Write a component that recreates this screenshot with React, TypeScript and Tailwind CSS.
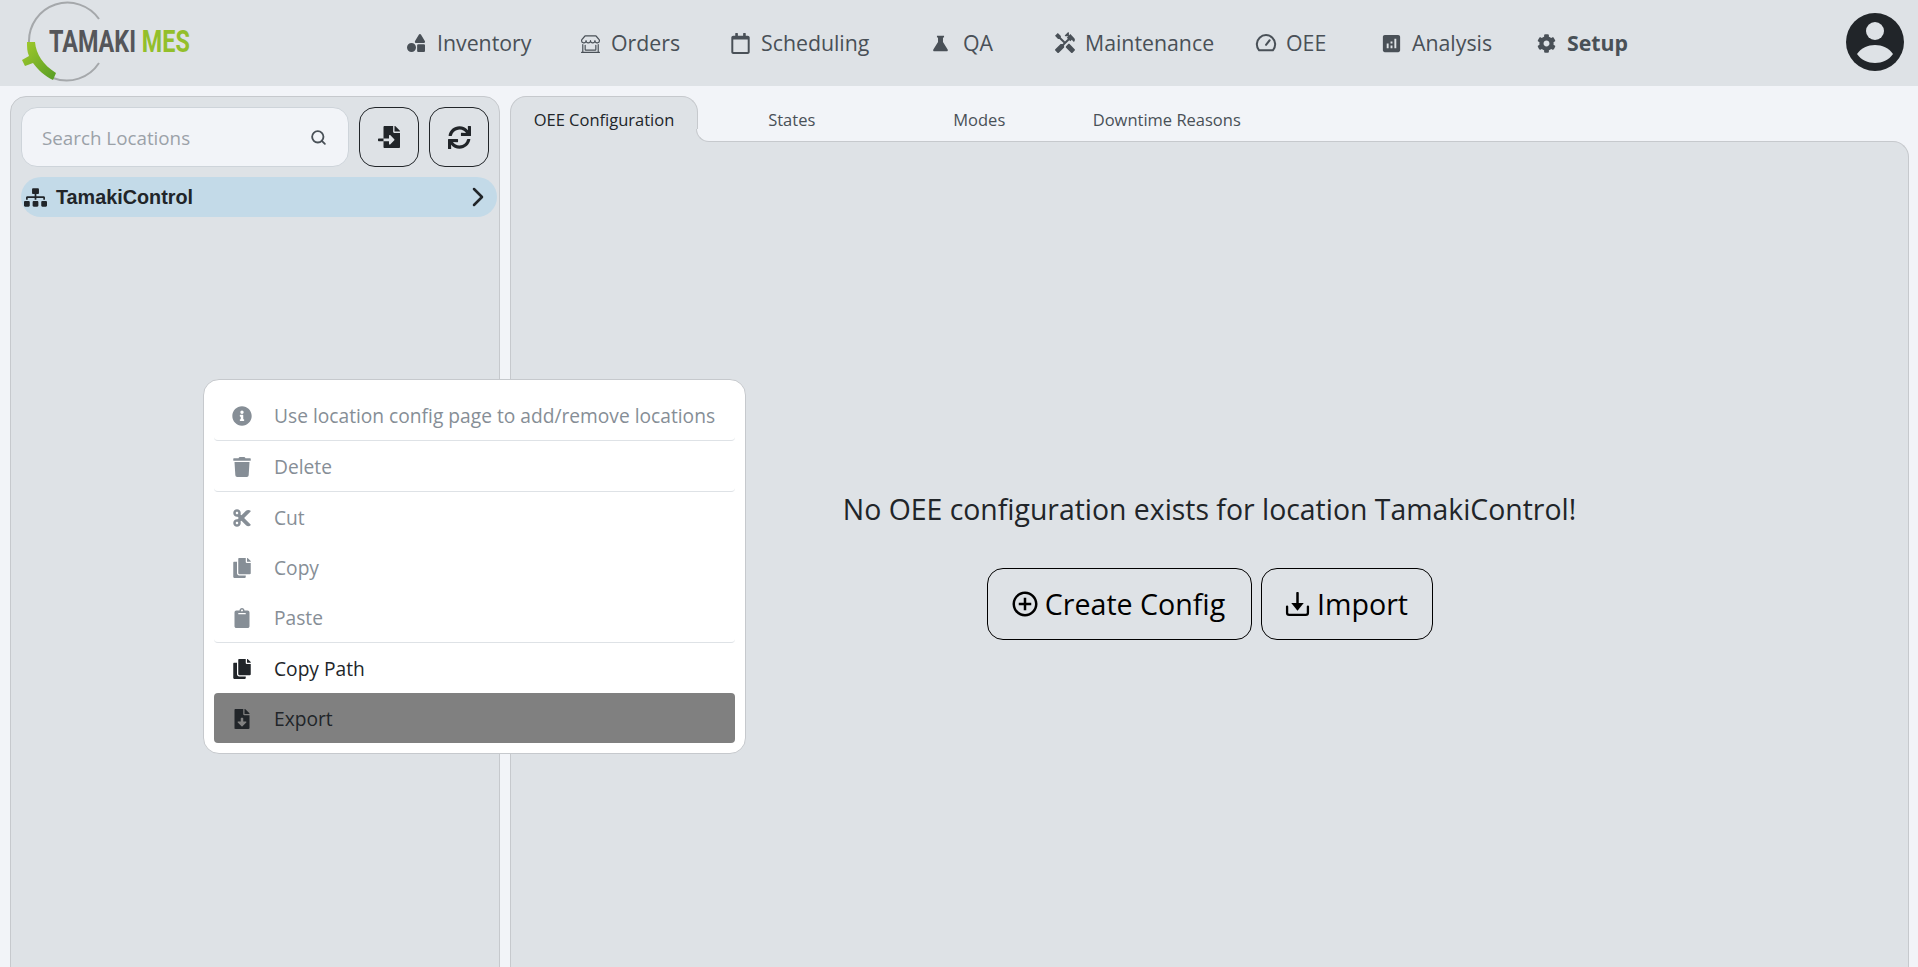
import React from "react";
import {
  FaShapes, FaRegCalendar, FaCog, FaSitemap, FaFileImport, FaSync,
  FaInfoCircle, FaTrash, FaCut, FaCopy, FaClipboard, FaFileDownload,
} from "react-icons/fa";
import { BsShopWindow } from "react-icons/bs";
import { MdHandyman, MdAnalytics, MdOutlineAddCircleOutline } from "react-icons/md";
import { ChevronRight, Search } from "lucide-react";

function GaugeIcon({ className }: { className?: string }) {
  return (
    <svg viewBox="0 0 24 24" fill="none" stroke="currentColor" strokeWidth="2.2" strokeLinecap="round" strokeLinejoin="round" className={className}>
      <path d="M4.5 20a10 10 0 1 1 15 0z" />
      <path d="M12 14l4-5" />
    </svg>
  );
}

function FlaskIcon({ className }: { className?: string }) {
  return (
    <svg viewBox="0 0 24 24" fill="currentColor" className={className}>
      <path d="M7 1h10v2.5h-1.500V10l6.600 10.400c.8 1.300-.1 2.600-1.500 2.600H3.400c-1.400 0-2.300-1.300-1.500-2.600L8.500 10V3.500H7z" />
    </svg>
  );
}

function TrayDownIcon({ className }: { className?: string }) {
  return (
    <svg viewBox="0 0 24 24" fill="none" className={className}>
      <path d="M2 14v6a2 2 0 0 0 2 2h16a2 2 0 0 0 2-2v-6" stroke="currentColor" strokeWidth="2.2" strokeLinecap="round" />
      <path d="M12 1v12" stroke="currentColor" strokeWidth="2.4" strokeLinecap="round" />
      <path d="M6 10.500h12L12 18z" fill="currentColor" />
    </svg>
  );
}

const navItems = [
  { label: "Inventory", icon: FaShapes, width: "w-[174px]", iconClass: "h-[18px] w-[18px]" },
  { label: "Orders", icon: BsShopWindow, width: "w-[150px]", iconClass: "h-[19px] w-[19px]" },
  { label: "Scheduling", icon: FaRegCalendar, width: "w-[202px]", iconClass: "h-[21px] w-[21px] -ml-px" },
  { label: "QA", icon: FlaskIcon, width: "w-[122px]", iconClass: "h-[17px] w-[17px] -ml-px" },
  { label: "Maintenance", icon: MdHandyman, width: "w-[201px]", iconClass: "h-[24px] w-[24px] -ml-[2px]" },
  { label: "OEE", icon: GaugeIcon, width: "w-[126px]", iconClass: "h-[22px] w-[22px] -ml-px" },
  { label: "Analysis", icon: MdAnalytics, width: "w-[155px]", iconClass: "h-[23px] w-[23px] -ml-[2px]" },
  { label: "Setup", icon: FaCog, width: "w-[100px]", iconClass: "h-[19px] w-[19px]", active: true },
];

function Logo() {
  return (
    <div className="relative h-[86px] w-[407px] shrink-0">
      <svg viewBox="0 0 200 86" className="absolute left-0 top-0 h-[86px] w-[200px]">
        <defs>
          <linearGradient id="logoGreen" x1="0" y1="0" x2="1" y2="1">
            <stop offset="0" stopColor="#a3cb2c" />
            <stop offset="1" stopColor="#569c25" />
          </linearGradient>
        </defs>
        <path d="M99 19A38.500 38.500 0 0 0 29 42" fill="none" stroke="#a5a8ab" strokeWidth="2" />
        <path d="M53 78A38.500 38.500 0 0 0 99 63" fill="none" stroke="#a5a8ab" strokeWidth="2" />
        <path d="M27 42h8c1 12 8 23 21 31l-3 7C45 76 38 70 33 63l-8 3-3-6 7-4c-2-4-2-9-2-14z" fill="url(#logoGreen)" />
      </svg>
      <div className="absolute left-[49px] top-[21px] origin-left scale-x-[.73] whitespace-nowrap font-['Roboto',sans-serif] text-[32px] font-bold leading-[40px] text-[#55565a]">
        TAMAKI <span className="text-[#93bf2b]">MES</span>
      </div>
    </div>
  );
}

function Header() {
  return (
    <header className="flex h-[86px] shrink-0 items-center bg-[#dee2e6]">
      <Logo />
      <nav className="flex items-center text-[#495057]">
        {navItems.map(({ label, icon: Icon, width, iconClass, active }) => (
          <a key={label} className={`flex ${width} items-center`}>
            <span className="flex w-[30px] shrink-0 items-center">
              <Icon className={iconClass} />
            </span>
            <span className={`text-[21.3px] leading-7 ${active ? "font-bold" : ""}`}>{label}</span>
          </a>
        ))}
      </nav>
      <div className="mb-[2px] ml-auto mr-[14px]">
        <svg viewBox="0 0 58 58" className="h-[58px] w-[58px]">
          <circle cx="29" cy="29" r="29" fill="#212529" />
          <circle cx="29" cy="18" r="9" fill="#dee2e6" />
          <path d="M11 41c4-6 11-9 18-9s14 3 18 9c-4 6-11 9-18 9s-14-3-18-9z" fill="#dee2e6" />
        </svg>
      </div>
    </header>
  );
}

function Sidebar() {
  return (
    <aside className="h-[900px] w-[490px] shrink-0 rounded-t-2xl border border-[#c6c9cd] bg-[#dee2e6] px-[10px] pt-[10px]">
      <div className="flex gap-[10px]">
        <div className="flex h-[60px] w-[328px] items-center rounded-2xl border border-[#ced4da] bg-[#f2f4f8] pl-[20px] pr-[21px]">
          <input
            placeholder="Search Locations"
            className="min-w-0 flex-1 bg-transparent pt-[2px] text-[18.8px] text-[#212529] outline-none placeholder:text-[#9ba1a8]"
          />
          <Search className="h-[17px] w-[17px] text-[#495057]" strokeWidth={2.6} />
        </div>
        <button className="flex h-[60px] w-[60px] items-center justify-center rounded-2xl border border-[#212529] text-[#212529]">
          <FaFileImport className="h-[22px] w-[22px]" />
        </button>
        <button className="flex h-[60px] w-[60px] items-center justify-center rounded-2xl border border-[#212529] text-[#212529]">
          <FaSync className="h-[23px] w-[23px]" />
        </button>
      </div>
      <div className="-mr-[8px] mt-[10px] flex h-[40px] items-center rounded-[20px] bg-[#c3dae8] pl-[3px] pr-[3px] text-[#212529]">
        <FaSitemap className="h-[23px] w-[23px]" />
        <span className="ml-[9px] flex-1 pt-px font-['Liberation_Sans',sans-serif] text-[19.8px] font-bold">TamakiControl</span>
        <ChevronRight className="h-[32px] w-[32px]" strokeWidth={1.9} />
      </div>
    </aside>
  );
}

const tabs = ["OEE Configuration", "States", "Modes", "Downtime Reasons"];

function Content() {
  return (
    <section className="flex h-[900px] w-[1399px] shrink-0 flex-col">
      <div className="flex h-[45px] shrink-0">
        {tabs.map((tab, i) =>
          i === 0 ? (
            <div
              key={tab}
              className="relative z-10 -mb-px flex w-[188px] items-center justify-center rounded-t-2xl border-x border-t border-[#c6c9cd] bg-[#dee2e6] pt-[1px] text-[16.5px] text-[#212529]"
            >
              {tab}
              <div className="absolute bottom-0 left-[calc(100%-1px)] h-[13px] w-[14px] bg-[#dee2e6]">
                <div className="h-full w-full rounded-bl-[13px] border-b border-l border-[#c6c9cd] bg-[#f2f4f8]" />
              </div>
            </div>
          ) : (
            <div key={tab} className="flex w-[187.5px] items-center justify-center pt-[3px] text-[16.5px] text-[#495057]">
              {tab}
            </div>
          ),
        )}
      </div>
      <div className="flex-1 rounded-tr-2xl border-x border-t border-[#c6c9cd] bg-[#dee2e6] pt-[345px] text-[#212529]">
        <p className="text-center text-[28.4px] leading-[44px]">No OEE configuration exists for location TamakiControl!</p>
        <div className="mt-[37px] flex justify-center gap-[9px] text-black">
          <button className="flex h-[72px] w-[265px] items-center justify-center gap-[5px] rounded-2xl border border-black pr-[3px] text-[28.6px]">
            <MdOutlineAddCircleOutline className="h-[30px] w-[30px]" />
            Create Config
          </button>
          <button className="flex h-[72px] w-[172px] items-center justify-center gap-[7px] rounded-2xl border border-black text-[28.6px]">
            <TrayDownIcon className="h-[25px] w-[25px]" />
            Import
          </button>
        </div>
      </div>
    </section>
  );
}

const menuGroups = [
  { label: "Use location config page to add/remove locations", icon: FaInfoCircle, disabled: true, divider: true },
  { label: "Delete", icon: FaTrash, disabled: true, divider: true },
  { label: "Cut", icon: FaCut, disabled: true },
  { label: "Copy", icon: FaCopy, disabled: true },
  { label: "Paste", icon: FaClipboard, disabled: true, divider: true },
  { label: "Copy Path", icon: FaCopy },
  { label: "Export", icon: FaFileDownload, focused: true },
];

function ContextMenu() {
  return (
    <div className="absolute left-[203px] top-[379px] z-20 w-[543px] rounded-2xl border border-[#c6c9cd] bg-white p-[10px]">
      {menuGroups.map(({ label, icon: Icon, disabled, divider, focused }) => (
        <div
          key={label}
          className={`flex items-center rounded pl-[18px] pt-[2px] text-[19.2px] ${divider ? "h-[51px] border-b border-[#dee2e6]" : "h-[50px]"} ${
            focused ? "bg-[#808080] text-[#212529]" : disabled ? "text-[#868e96]" : "text-[#212529]"
          }`}
        >
          <Icon className="h-[20px] w-[20px]" />
          <span className="ml-[22px]">{label}</span>
        </div>
      ))}
    </div>
  );
}

export default function App() {
  return (
    <div className="relative flex h-screen flex-col overflow-hidden bg-[#f2f4f8] font-['Open_Sans',sans-serif]">
      <Header />
      <main className="flex gap-[10px] pl-[10px] pt-[10px]">
        <Sidebar />
        <Content />
      </main>
      <ContextMenu />
    </div>
  );
}
